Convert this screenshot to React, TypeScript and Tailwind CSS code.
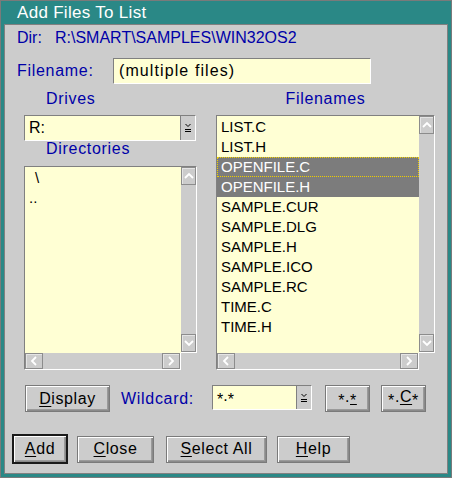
import React from 'react';

// OS/2-style "Add Files To List" dialog

const files = [
  'LIST.C',
  'LIST.H',
  'OPENFILE.C',
  'OPENFILE.H',
  'SAMPLE.CUR',
  'SAMPLE.DLG',
  'SAMPLE.H',
  'SAMPLE.ICO',
  'SAMPLE.RC',
  'TIME.C',
  'TIME.H',
];

const label = 'text-[#0000a8] text-[16px] leading-[16px] tracking-[0.7px]';

function Chevron({ dir }: { dir: 'up' | 'down' | 'left' | 'right' }) {
  const d = {
    up: 'M1 6 L5 2 L9 6',
    down: 'M1 2 L5 6 L9 2',
    left: 'M6 1 L2 5 L6 9',
    right: 'M2 1 L6 5 L2 9',
  }[dir];
  const vert = dir === 'up' || dir === 'down';
  return (
    <svg width={vert ? 10 : 8} height={vert ? 8 : 10} viewBox={vert ? '0 0 10 8' : '0 0 8 10'}>
      <path d={d} fill="none" stroke="#ffffff" strokeWidth="1.8" />
    </svg>
  );
}

function ScrollBtn({ dir }: { dir: 'up' | 'down' | 'left' | 'right' }) {
  const vert = dir === 'up' || dir === 'down';
  return (
    <div
      className={`${vert ? 'w-[15px] h-[18px]' : 'w-[18px] h-[16px]'} bg-[#cccccc] border border-[#8c8c8c] shadow-[inset_1px_1px_0_#e4e4e4] flex items-center justify-center`}
    >
      <Chevron dir={dir} />
    </div>
  );
}

function DropGlyph() {
  return (
    <svg width="8" height="10" viewBox="0 0 8 10">
      <path d="M1.5 1 L4 3.5 L6.5 1" fill="none" stroke="#000" strokeWidth="1" />
      <path d="M1 6.5 H7 M1 8.5 H7" stroke="#000" strokeWidth="1" />
    </svg>
  );
}

// asterisk sitting on the middle of the line, like the bitmap font
function Star() {
  return <span className="align-[-4px]">*</span>;
}

function Combo({ children, className }: { children: React.ReactNode; className: string }) {
  return (
    <div
      className={`flex border-t border-l border-t-[#808080] border-l-[#808080] border-b border-r border-b-white border-r-white ${className}`}
    >
      <div className="flex-1 bg-[#ffffd4] text-black text-[16px] pl-[4px] flex items-center">
        <span>{children}</span>
      </div>
      <div className="w-[15px] bg-[#cccccc] border-l border-l-[#808080] flex items-center justify-center">
        <DropGlyph />
      </div>
    </div>
  );
}

function ListBox({ className, children }: { className: string; children: React.ReactNode }) {
  return (
    <div className={`grid grid-cols-[1fr_16px] grid-rows-[1fr_17px] ${className}`}>
      <div className="bg-[#ffffd4] border-t border-l border-t-[#808080] border-l-[#808080] overflow-hidden pt-[1px]">
        {children}
      </div>
      <div className="flex flex-col justify-between bg-[#cccccc] border-t border-t-[#808080] border-r border-r-white border-b border-b-white">
        <ScrollBtn dir="up" />
        <ScrollBtn dir="down" />
      </div>
      <div className="flex justify-between bg-[#cccccc] border-l border-l-[#808080] border-b border-b-white border-r border-r-white">
        <ScrollBtn dir="left" />
        <ScrollBtn dir="right" />
      </div>
      <div />
    </div>
  );
}

function Button({
  children,
  className,
  isDefault,
}: {
  children: React.ReactNode;
  className: string;
  isDefault?: boolean;
}) {
  return (
    <button
      className={`bg-[#cccccc] text-black text-[16px] tracking-[0.6px] flex items-center justify-center shadow-[inset_1px_1px_0_#ffffff,inset_-1px_-1px_0_#8a8a8a,inset_-2px_-2px_0_#9a9a9a] ${
        isDefault ? 'border-2 border-[#1a1a1a]' : 'border border-[#7a7a7a]'
      } ${className}`}
    >
      <span>{children}</span>
    </button>
  );
}

export default function App() {
  return (
    <div className="w-[452px] h-[478px] flex flex-col bg-[#2a8886] border border-[#7a7a7a] font-['Liberation_Sans',Arial,sans-serif] select-none">
      {/* Title bar */}
      <div className="h-[23px] flex items-center pl-[16px] pt-[1px] text-white text-[17px] tracking-[0.3px]">
        Add Files To List
      </div>

      {/* Dialog body */}
      <div className="flex-1 mx-[3px] mb-[3px] bg-[#cccccc] border border-[#808080] flex flex-col">
        <div className="flex pt-[4px] pl-[12px] text-[#0000a8] text-[16px] leading-[18px]">
          <span className="w-[38px]">Dir:</span>
          <span>R:\SMART\SAMPLES\WIN32OS2</span>
        </div>

        <div className="flex items-center mt-[11px] pl-[12px]">
          <span className={`w-[96px] ${label}`}>Filename:</span>
          <div className="w-[258px] h-[26px] flex items-center pl-[5px] bg-[#ffffd4] border-t border-l border-t-[#808080] border-l-[#808080] border-b border-r border-b-white border-r-white text-black text-[16px] tracking-[1.1px]">
            (multiple files)
          </div>
        </div>

        <div className="flex mt-[7px] ml-[19px] gap-[19px]">
          {/* Drives + directories */}
          <div className="w-[173px] flex flex-col">
            <span className={`pl-[22px] ${label}`}>Drives</span>
            <Combo className="mt-[8px] w-[172px] h-[26px]">R:</Combo>
            <span className={`pl-[22px] ${label}`}>Directories</span>
            <ListBox className="mt-[9px] h-[204px]">
              <div className="h-[20px] leading-[20px] pl-[10px] text-[15px] text-black">\</div>
              <div className="h-[20px] leading-[20px] pl-[4px] text-[15px] text-black">..</div>
            </ListBox>
          </div>

          {/* Filenames */}
          <div className="w-[219px] flex flex-col">
            <span className={`text-center ${label}`}>Filenames</span>
            <ListBox className="mt-[8px] h-[255px]">
              {files.map((f, i) => (
                <div
                  key={f}
                  className={`h-[20px] leading-[18px] pl-[3px] text-[15px] ${
                    i === 2
                      ? 'bg-[#7c7c7c] text-white border border-dotted border-[#f0d000]'
                      : i === 3
                        ? 'bg-[#7c7c7c] text-white border border-transparent'
                        : 'text-black border border-transparent'
                  }`}
                >
                  {f}
                </div>
              ))}
            </ListBox>
          </div>
        </div>

        {/* Display / wildcard row */}
        <div className="flex items-center mt-[15px] ml-[20px] h-[27px]">
          <Button className="w-[85px] h-[27px]">
            <u className="underline-offset-2">D</u>isplay
          </Button>
          <span className={`ml-[11px] w-[91px] ${label}`}>Wildcard:</span>
          <Combo className="w-[100px] h-[25px] -mt-[2px]">
            <Star />.<Star />
          </Combo>
          <Button className="ml-[13px] w-[45px] h-[27px]">
            <Star />.<u className="underline-offset-2"><Star /></u>
          </Button>
          <Button className="ml-[11px] w-[45px] h-[27px]">
            <Star />.<u className="underline-offset-2">C</u><Star />
          </Button>
        </div>

        {/* Action buttons */}
        <div className="flex items-center mt-[22px] ml-[7px] h-[30px]">
          <Button isDefault className="w-[56px] h-[30px]">
            <u className="underline-offset-2">A</u>dd
          </Button>
          <Button className="ml-[9px] w-[77px] h-[27px]">
            <u className="underline-offset-2">C</u>lose
          </Button>
          <Button className="ml-[12px] w-[101px] h-[27px]">
            <u className="underline-offset-2">S</u>elect All
          </Button>
          <Button className="ml-[10px] w-[73px] h-[27px]">
            <u className="underline-offset-2">H</u>elp
          </Button>
        </div>
      </div>
    </div>
  );
}
